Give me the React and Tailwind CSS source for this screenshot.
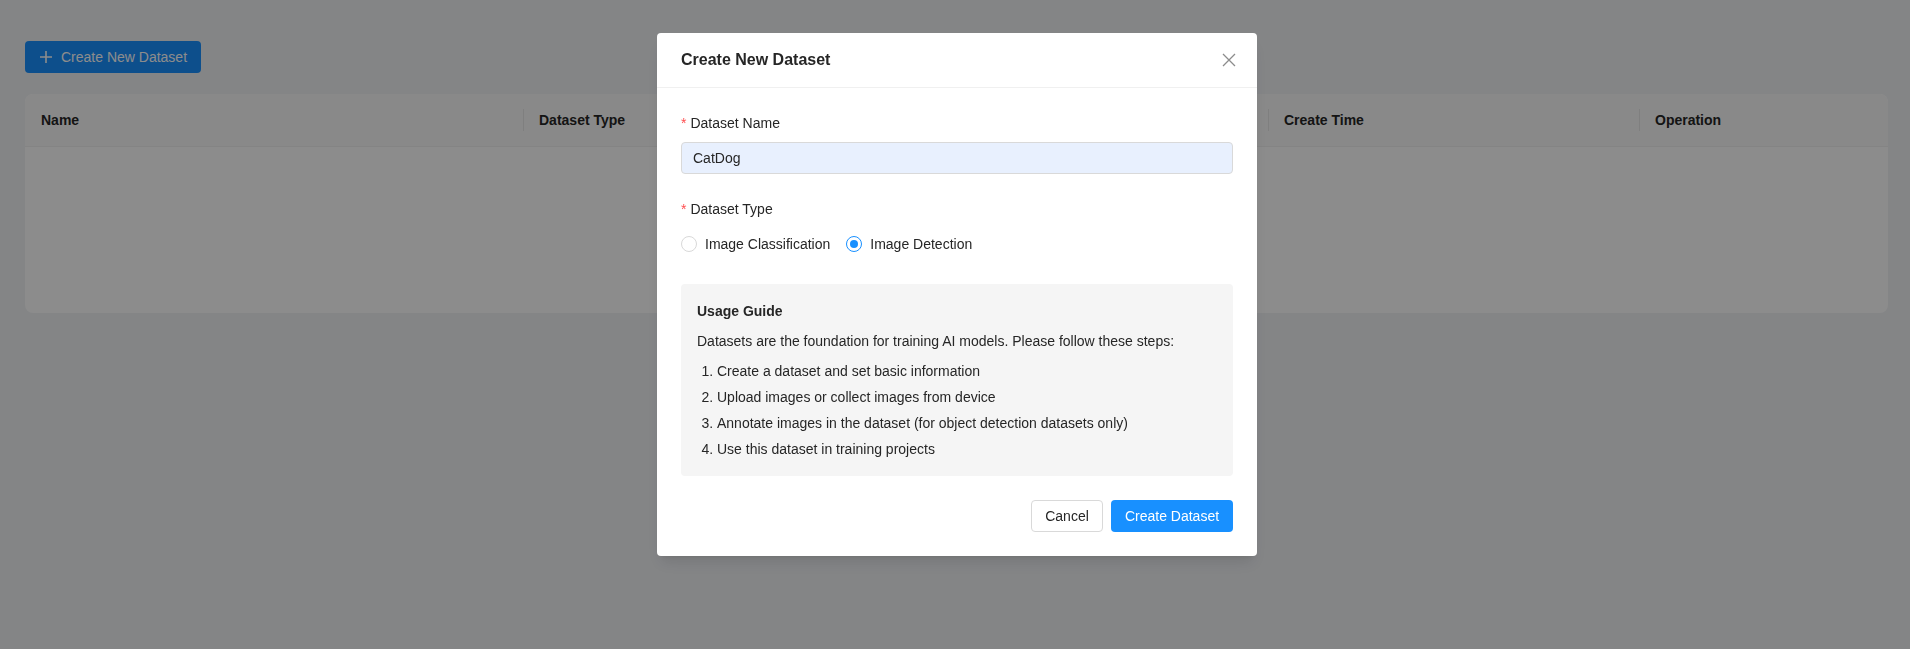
import { useState } from 'react'

const COLUMNS = [
  { key: 'name', label: 'Name', width: 'w-[498px]' },
  { key: 'type', label: 'Dataset Type', width: 'w-[372px]' },
  { key: 'count', label: 'Image Count', width: 'w-[373px]' },
  { key: 'time', label: 'Create Time', width: 'w-[371px]' },
  { key: 'op', label: 'Operation', width: 'flex-1' },
]

const TYPES = [
  { value: 'classification', label: 'Image Classification' },
  { value: 'detection', label: 'Image Detection' },
]

const STEPS = [
  'Create a dataset and set basic information',
  'Upload images or collect images from device',
  'Annotate images in the dataset (for object detection datasets only)',
  'Use this dataset in training projects',
]

function Radio({ checked, label, onClick }) {
  return (
    <label onClick={onClick} className="flex items-center mr-2 cursor-pointer">
      <span className={`w-4 h-4 rounded-full border bg-white flex items-center justify-center ${checked ? 'border-[#1890ff]' : 'border-[#d9d9d9]'}`}>
        {checked && <span className="w-2 h-2 rounded-full bg-[#1890ff]" />}
      </span>
      <span className="px-2 text-sm leading-[22px] text-[#262626]">{label}</span>
    </label>
  )
}

export default function App() {
  const [name, setName] = useState('CatDog')
  const [type, setType] = useState('detection')

  return (
    <div className="min-h-screen bg-[#f0f2f5] font-['Liberation_Sans',Arial,sans-serif] text-sm text-[#262626]">
      <div className="pl-[25px] pr-[22px] pt-[41px]">
        <button className="h-8 w-[176px] flex items-center justify-center gap-2 bg-[#1890ff] text-white text-sm rounded-sm">
          <svg width="14" height="14" viewBox="0 0 14 14" fill="none" stroke="currentColor" strokeWidth="1.6">
            <path d="M7 1v12M1 7h12" />
          </svg>
          Create New Dataset
        </button>

        <div className="mt-[21px] bg-white rounded-lg overflow-hidden">
          <div className="flex h-[53px] bg-[#fafafa] border-b border-[#f0f0f0]">
            {COLUMNS.map((c, i) => (
              <div key={c.key} className={`${c.width} relative flex items-center px-4 font-semibold text-[#262626]`}>
                {i > 0 && <span className="absolute left-0 top-1/2 -translate-y-1/2 w-px h-[22px] bg-[#e8e8e8]" />}
                {c.label}
              </div>
            ))}
          </div>
          <div className="h-[166px]" />
        </div>
      </div>

      {/* modal */}
      <div className="fixed inset-0 bg-black/45 flex justify-center pt-[33px] pl-1">
        <div className="w-[600px] h-fit bg-white rounded-sm shadow-lg">
          <div className="h-[55px] px-6 flex items-center justify-between border-b border-[#f0f0f0]">
            <h2 className="text-base font-semibold text-[#262626]">Create New Dataset</h2>
            <svg width="14" height="14" viewBox="0 0 14 14" fill="none" stroke="#8c8c8c" strokeWidth="1.3" className="mr-[-3px]">
              <path d="M1 1l12 12M13 1L1 13" />
            </svg>
          </div>

          <div className="p-6">
            <div className="pb-2 leading-[22px]">
              <span className="text-[#ff4d4f] mr-1">*</span>Dataset Name
            </div>
            <input value={name} onChange={(e) => setName(e.target.value)}
              className="w-full h-8 px-[11px] border border-[#d9d9d9] bg-[#e8f0fe] rounded-sm text-sm text-[#262626] focus:outline-none" />

            <div className="mt-6 pb-2 leading-[22px]">
              <span className="text-[#ff4d4f] mr-1">*</span>Dataset Type
            </div>
            <div className="h-8 flex items-center">
              {TYPES.map((t) => (
                <Radio key={t.value} checked={type === t.value} label={t.label} onClick={() => setType(t.value)} />
              ))}
            </div>

            <div className="mt-6 bg-[#f5f5f5] rounded p-4 leading-[22px] text-[#262626]">
              <div className="font-semibold">Usage Guide</div>
              <p className="mt-2">Datasets are the foundation for training AI models. Please follow these steps:</p>
              <ol className="mt-2 pl-5 list-decimal">
                {STEPS.map((s, i) => (
                  <li key={s} className={i > 0 ? 'mt-1' : ''}>{s}</li>
                ))}
              </ol>
            </div>

            <div className="mt-6 flex justify-end gap-2">
              <button className="h-8 w-[72px] border border-[#d9d9d9] rounded-sm bg-white text-[#262626]">Cancel</button>
              <button className="h-8 w-[122px] rounded-sm bg-[#1890ff] text-white">Create Dataset</button>
            </div>
          </div>
        </div>
      </div>
    </div>
  )
}
